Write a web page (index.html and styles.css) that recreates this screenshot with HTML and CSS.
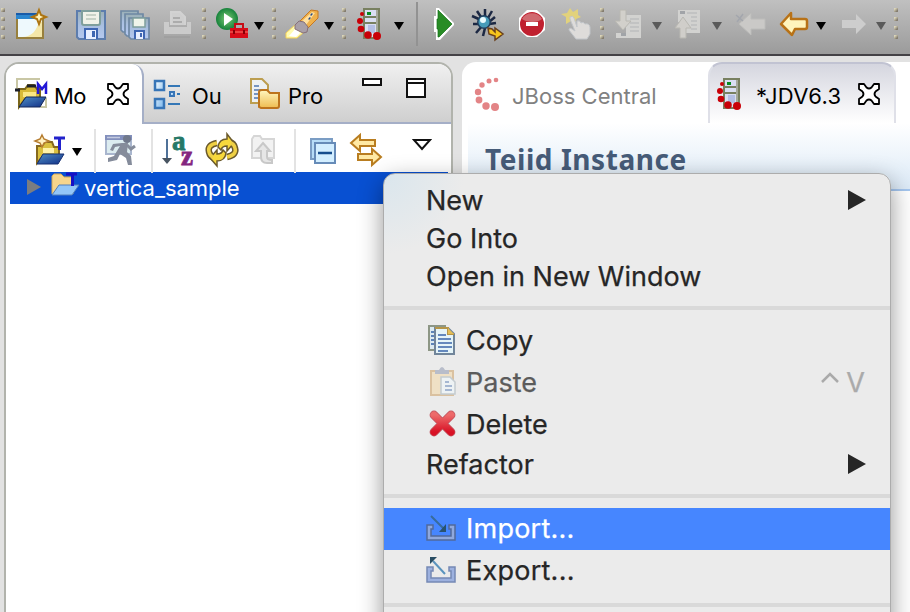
FILE: index.html
```html
<!DOCTYPE html>
<html lang="en">
<head>
<meta charset="utf-8">
<title>Teiid Designer</title>
<link rel="stylesheet" href="styles.css">
</head>
<body>
<svg class="defs" aria-hidden="true">
  <defs>
    <linearGradient id="disk" x2="0" y2="1"><stop stop-color="#9aafb5"/><stop offset=".5" stop-color="#a9bfe0"/><stop offset="1" stop-color="#b5c9f0"/></linearGradient>
    <linearGradient id="gold" x2="0" y2="1"><stop stop-color="#fff7c0"/><stop offset="1" stop-color="#eebc50"/></linearGradient>
    <linearGradient id="navy" x2="1" y2="1"><stop stop-color="#4f8fc4"/><stop offset="1" stop-color="#102e87"/></linearGradient>
    <linearGradient id="sky" x2="1" y2="1"><stop stop-color="#f5fcff"/><stop offset="1" stop-color="#79b5ec"/></linearGradient>
    <linearGradient id="red" x2="0" y2="1"><stop stop-color="#ed6a6a"/><stop offset="1" stop-color="#d81125"/></linearGradient>
    <radialGradient id="green"><stop stop-color="#7cca73"/><stop offset="1" stop-color="#16823b"/></radialGradient>
    <symbol id="caret" viewBox="0 0 10 8"><path d="M0 0h10L5 8z" fill="currentColor"/></symbol>
    <symbol id="close" viewBox="0 0 22 22"><path d="M1 1h5l2.500 3.500q2.500 2 5 0L16 1h5v5l-3.500 2.500q-2 2.500 0 5L21 16v5h-5l-2.500-3.500q-2.500-2-5 0L6 21H1v-5l3.500-2.500q2-2.500 0-5L1 6z" fill="#fff" stroke="#000" stroke-width="1.800" stroke-linejoin="round"/></symbol>
    <symbol id="server" viewBox="0 0 32 32">
      <path d="M9 1h15v29H9z" fill="#d9def1" stroke="#788060" stroke-width="2"/>
      <path d="M9 9h15M9 15h15" stroke="#788060" stroke-width="2"/><path d="M22 2v27" stroke="#a5a99b" stroke-width="2"/>
      <path d="M13 17h7v8h-7z" fill="#b4bfe5"/><path d="M12 4h4v3h-4z" fill="#078c1e"/>
      <g fill="#c90008"><circle cx="7" cy="6" r="2"/><circle cx="5" cy="13" r="3"/><circle cx="6" cy="21" r="3.300"/><circle cx="13" cy="27" r="3.800"/><circle cx="22" cy="28" r="4"/></g>
    </symbol>
  </defs>
</svg>

<header class="toolbar">
  <i class="grip"></i>
  <svg class="icon" viewBox="0 0 32 32"><path d="M2 8h26v22H2z" fill="#eef9fd" stroke="#98803d" stroke-width="2"/><path d="M1 5h22v6H1z" fill="#2c86cf"/><path d="M1 5h22v2H1z" fill="#195ba8"/><path d="M7 29c10 0 15-7 17-16l3 1v15z" fill="#f4e7a8"/><path d="M24 2l2 5 5 2-5 2-2 5-2-5-5-2 5-2z" fill="#fff4bd" stroke="#ad7411" stroke-width="2"/></svg>
  <svg class="caret"><use href="#caret"/></svg>
  <svg class="icon" viewBox="0 0 32 32"><path d="M2 3h28v28H4l-2-2z" fill="url(#disk)" stroke="#5d7dad" stroke-width="2"/><path d="M7 3h18v12q0 2-2 2H9q-2 0-2-2z" fill="#f0f2e8" stroke="#7f9f9c" stroke-width="2"/><path d="M11 7h10M11 11h10" stroke="#c8d2c6" stroke-width="2"/><path d="M10 31V21h12v10" fill="#e8efff" stroke="#3e66b2" stroke-width="2"/><path d="M17 23h3v6h-3z" fill="#3e66b2"/></svg>
  <svg class="icon" viewBox="0 0 32 32"><g fill="url(#disk)" stroke="#6e88a4" stroke-width="1.700"><path d="M2 3h17v21H4l-2-2z"/><path d="M6 6h18v22H8l-2-2z"/><path d="M10 10h20v21H12l-2-2z"/></g><path d="M14 10h12v9H14z" fill="#eff4ea" stroke="#7f9f9c" stroke-width="1.500"/><path d="M16 31v-8h9v8" fill="#e8efff" stroke="#3e66b2" stroke-width="2"/><path d="M21 25h2v4h-2z" fill="#3e66b2"/></svg>
  <svg class="icon" viewBox="0 0 32 32"><path d="M10 17V4h9l5 5v8" fill="#cfcfcf" stroke="#d2d2d2" stroke-width="2"/><path d="M12 10h7M12 14h9" stroke="#acacac" stroke-width="2"/><path d="M3 14h5v5h18v-5h4v12H3z" fill="#cbcbcb"/><path d="M3 29h26" stroke="#989898"/></svg>
  <i class="grip"></i>
  <svg class="icon" viewBox="0 0 32 32"><circle cx="12" cy="11" r="11" fill="url(#green)"/><path d="M9 5l9 6-9 7z" fill="#fff"/><path d="M20 20v-4h8v4" fill="none" stroke="#c50d16" stroke-width="2"/><path d="M15 20h18v10H15z" fill="#d80c18"/><path d="M15 24h18" stroke="#f2554f" stroke-width="1.500"/><path d="M19 22v4M29 22v4" stroke="#850006" stroke-width="2"/></svg>
  <svg class="caret"><use href="#caret"/></svg>
  <i class="grip"></i>
  <svg class="icon" viewBox="0 0 32 32"><path d="M15 13L26 2l7 1v7L22 21z" fill="#efb14c" stroke="#c67822"/><path d="M17 13L27 4l3 1-9 12z" fill="#ffe0a0"/><path d="M26 6l1 1m-3 3l1 1" stroke="#244986" stroke-width="2.500"/><path d="M1 30v-5l10-9 8 8-7 6z" fill="#fffbb0" stroke="#f5d256"/><path d="M4 28l7-8 4 5-4 4z" fill="#fff"/><path d="M10 17l4-4 5 1 4 5-1 5-4 1-8-4z" fill="#a9a0a8" stroke="#86707a"/></svg>
  <svg class="caret"><use href="#caret"/></svg>
  <i class="grip"></i>
  <svg class="icon" viewBox="0 0 32 32"><use href="#server"/></svg>
  <svg class="caret"><use href="#caret"/></svg>
  <i class="divider"></i>
  <svg class="icon" viewBox="0 0 32 32"><path d="M9 0h3l15 15v2L13 32H9v-8H7V8h2z" fill="#fff"/><path d="M11 2l14 14-13 13h-1v-8h-1V11h1z" fill="#288c25" stroke="#15701a" stroke-width=".7"/></svg>
  <svg class="icon" viewBox="0 0 32 32"><path d="M6 3l4 6M14 1v8M21 3l-4 7M1 8l9 4M2 16h8M5 25l6-7M24 9l-6 5M25 15l-7 1M12 28l2-8" stroke="#1c2843" stroke-width="2.500"/><circle cx="13" cy="14" r="7" fill="#22405f"/><circle cx="13" cy="14" r="5.500" fill="#469bb9"/><circle cx="12" cy="12" r="3" fill="#e9fbff"/><path d="M17 20l4 1 3 3v-4l8 6-8 6v-4l-6-2z" fill="#f8c51c" stroke="#69401d" stroke-width="1.500"/></svg>
  <svg class="icon" viewBox="0 0 32 32"><path d="M10 2h10l8 8v12l-8 7H10l-8-7V10z" fill="#fff"/><circle cx="15" cy="16" r="12" fill="#c0202f"/><path d="M5 11a11 10 0 0120 0c-4 4-15 4-20 0z" fill="#d06a70"/><path d="M9 14h12v4H9z" fill="#fff"/></svg>
  <svg class="icon" viewBox="0 0 32 32"><path d="M9 0l3 4 5-3v6l3 2-5 2-1 5-4-3-5 3V9L0 6l6-1z" fill="#e2d27c"/><path d="M9 9q3-2 4 1l3 9V13q3-1 4 2 2-2 4 1 4-1 5 3v7l-3 5H15l-7-9q0-3 3-1l3 2-5-12z" fill="#dedcda" stroke="#c2c6ca"/></svg>
  <i class="grip"></i>
  <svg class="icon" viewBox="0 0 32 32"><path d="M13 7h15v23H3v-5h10z" fill="#d2d2d0"/><path d="M17 11h9M17 15h9M17 19h9M17 23h9" stroke="#c2c3c3" stroke-width="2"/><path d="M7 2h6v11h5l-8 9-8-9h5z" fill="#d2d0cb" stroke="#b9b8b2"/><path d="M8 25h5v3H8z" fill="#a1a4a8"/></svg>
  <svg class="caret dim"><use href="#caret"/></svg>
  <svg class="icon" viewBox="0 0 32 32"><path d="M5 2h22v23H11v-11H5z" fill="#d2d2d0"/><path d="M14 5h10M18 9h6M18 13h6M18 17h6M18 21h6" stroke="#c2c3c3" stroke-width="2"/><path d="M7 30h6V20h5l-8-11-8 11h5z" fill="#d0ceca" stroke="#b9b8b2"/><path d="M7 3h5v3H7z" fill="#a1a4a8"/></svg>
  <svg class="caret dim"><use href="#caret"/></svg>
  <svg class="icon" viewBox="0 0 32 32"><path d="M5 16L17 5v6h14v10H17v6z" fill="#cac9c7" stroke="#bcbcba"/><path d="M2 7l7 6M9 6l-6 8" stroke="#a3a6ad" stroke-width="1.500"/></svg>
  <svg class="icon" viewBox="0 0 32 32"><path d="M3 16L13 5v6h14q2 0 2 2v6q0 2-2 2H17l-3 6-11-11z" fill="#fff4bc" stroke="#b87217" stroke-width="2.500" stroke-linejoin="round"/></svg>
  <svg class="caret"><use href="#caret"/></svg>
  <svg class="icon" viewBox="0 0 32 32"><path d="M28 16L18 6v6H4v8h14v6z" fill="#cdcdcd"/></svg>
  <svg class="caret dim"><use href="#caret"/></svg>
  <i class="grip"></i>
</header>

<main class="workbench">
  <section class="explorer">
    <nav class="tabs">
      <div class="tab tab-active">
        <svg class="icon" viewBox="0 0 32 32"><path d="M2 12V1h23M31 20v9h-6" fill="none" stroke="#c9c7a5" stroke-width="2"/><path d="M4 29V11h6l3-4h6l3 4h3v10H10z" fill="#d8ba36" stroke="#7a661a" stroke-width="2"/><path d="M0 12h5M12 8h9" stroke="#1c1f28" stroke-width="3"/><path d="M8 14h13v5H8z" fill="#fae783"/><path d="M11 19h20l-6 10H4z" fill="url(#navy)" stroke="#142656"/><path d="M23 16V6l4 5 4-5v10" fill="none" stroke="#2116d6" stroke-width="2.500"/></svg>
        <span class="label">Mo</span>
        <svg class="close"><use href="#close"/></svg>
      </div>
      <div class="tab-rest">
        <svg class="icon" viewBox="0 0 32 32"><g fill="url(#sky)" stroke="#3775b7" stroke-width="2.500"><path d="M4 3h9v9H4zM4 21h9v9H4z"/><path d="M19 14h4v4h-4z" stroke-width="2"/></g><path d="M17 8h12M26 16h3M17 26h12" stroke="#3477b6" stroke-width="2"/></svg>
        <span class="label label-ou">Ou</span>
        <svg class="icon icon-pro" viewBox="0 0 32 32"><path d="M2 1h11l6 6v18H2z" fill="#edf1f3" stroke="#bc9e50" stroke-width="2"/><path d="M5 8h5M5 12h8M5 16h5M5 20h5" stroke="#7695c1" stroke-width="2"/><path d="M10 29V14q0-2 3-2h5l3 3h9v13q0 2-2 2H12z" fill="url(#gold)" stroke="#bd741d" stroke-width="2"/></svg>
        <span class="label label-pro">Pro</span>
        <svg class="winmin" viewBox="0 0 20 8"><path d="M1 1h18v6H1z" fill="#fff" stroke="#111" stroke-width="2"/></svg>
        <svg class="winmax" viewBox="0 0 20 20"><path d="M1 1h18v18H1zM1 5h18" fill="#fff" stroke="#111" stroke-width="2"/></svg>
      </div>
    </nav>
    <div class="viewbar">
      <svg class="icon" viewBox="0 0 32 32"><path d="M3 29V12h5l3-4h7l2 5h5v8H10z" fill="#dac03f" stroke="#86691e" stroke-width="2"/><path d="M9 14h11v5H9z" fill="#fff2a8"/><path d="M9 20h21l-6 10H3z" fill="url(#navy)" stroke="#173073"/><path d="M8 1l2 4 5 2-5 2-2 4-2-4-5-2 5-2z" fill="#fff1c2" stroke="#b67d30" stroke-width="1.500"/><path d="M20 4h11M25.500 4v12" stroke="#2222cc" stroke-width="3"/></svg>
      <svg class="caret"><use href="#caret"/></svg>
      <i class="split"></i>
      <svg class="icon" viewBox="0 0 32 32"><path d="M1 2h25v18H1z" fill="#dcecf0" stroke="#a9b6ce" stroke-width="2"/><path d="M0 1h27v5H0z" fill="#8390bd"/><path d="M2 3.500h13" stroke="#c4cae0" stroke-width="1.500"/><circle cx="22" cy="5" r="4" fill="#71798c"/><path d="M17 9h6l-1 9 4 4 1 9h-4l-2-7-6-4-3 6-9 2v-4l6-2 6-10-5 1-2 4-3-1 3-6z" fill="#858c9b"/><path d="M22 11l4 4 4-3" fill="none" stroke="#858c9b" stroke-width="3"/></svg>
      <i class="split"></i>
      <svg class="icon" viewBox="0 0 32 32"><path d="M5 5v20" stroke="#4f7198" stroke-width="2"/><path d="M0 24h10l-5 6z" fill="#485461"/><text x="10" y="16" class="sort-a">a</text><text x="19" y="31" class="sort-z">z</text></svg>
      <svg class="icon" viewBox="0 0 32 32"><g fill="none" stroke="#6b5a2c" stroke-width="6.500"><path d="M11 9Q1 11 3 18q1 5 6 6"/><path d="M21 23q10-2 8-9-1-5-6-6"/></g><path d="M21 0v5q-8 0-9 8l3 3q1-4 6-4v5l7-8z" fill="#f7d83c" stroke="#6b5a2c" stroke-width="1.500"/><path d="M11 32v-5q8 0 9-8l-3-3q-1 4-6 4v-4l-7 8z" fill="#f7d83c" stroke="#6b5a2c" stroke-width="1.500"/><g fill="none" stroke="#efd044" stroke-width="3.500"><path d="M11 9Q1 11 3 18q1 4 4 5"/><path d="M21 23q10-2 8-9-1-4-4-5"/></g></svg>
      <svg class="icon" viewBox="0 0 32 32"><path d="M4 24V5l2-3h6l2 3h12v19z" fill="#f2f2f2" stroke="#d6d6d6" stroke-width="2"/><path d="M15 9l7 8h-3v6q0 3 5 3v3h-5q-6 0-6-6v-6H8z" fill="#e6e6e6" stroke="#c8c8c8" stroke-width="2"/></svg>
      <i class="split"></i>
      <svg class="icon" viewBox="0 0 32 32"><path d="M3 5h21v20H3z" fill="#b7dcf7" stroke="#7b9dc4" stroke-width="2"/><path d="M7 9h20v20H7z" fill="#d3eeff" stroke="#668bb8" stroke-width="2"/><path d="M10 19h14" stroke="#164d8d" stroke-width="2.500"/></svg>
      <svg class="icon" viewBox="0 0 32 32"><g fill="#ffe9a4" stroke="#b97d20" stroke-width="2"><path d="M1 9L10 1v5h15v6H10v5z"/><path d="M31 23l-9-8v5H8v6h14v5z"/></g></svg>
      <svg class="viewmenu" viewBox="0 0 20 12"><path d="M2 1h16l-8 9z" fill="#fff" stroke="#111" stroke-width="2"/></svg>
    </div>
    <div class="tree-row">
      <svg class="twisty" viewBox="0 0 14 18"><path d="M0 1v16l14-8z" fill="#7b7d80"/></svg>
      <svg class="icon" viewBox="0 0 32 32"><path d="M3 22V4l2-2h7l3 3h9v17z" fill="#f6d58c" stroke="#d1a855"/><path d="M10 13h20l-7 10H3z" fill="#92c6f8" stroke="#507fbb"/><path d="M17 2h11M23.500 2v12" stroke="#160fc4" stroke-width="3"/></svg>
      <span class="tree-label">vertica_sample</span>
    </div>
  </section>

  <section class="editor">
    <nav class="editor-tabs">
      <div class="etab">
        <svg class="icon" viewBox="0 0 32 32"><g fill="#e38486"><circle cx="22" cy="2" r="2.300"/><circle cx="15" cy="3" r="2.500"/><circle cx="8" cy="7" r="2.700"/><circle cx="4" cy="14" r="3.200"/><circle cx="5" cy="22" r="3.400"/><circle cx="12" cy="28" r="3.700"/><circle cx="21" cy="29" r="4"/></g></svg>
        <span class="label central">JBoss Central</span>
      </div>
      <div class="etab etab-active">
        <svg class="icon" viewBox="0 0 32 32"><use href="#server"/></svg>
        <span class="label jdv">*JDV6.3</span>
        <svg class="close"><use href="#close"/></svg>
      </div>
    </nav>
    <div class="form-head"><h1>Teiid Instance</h1></div>
  </section>
</main>

<div class="menu">
  <div class="item"><span>New</span><svg class="arrow" viewBox="0 0 18 20"><path d="M0 0v20l18-10z"/></svg></div>
  <div class="item"><span>Go Into</span></div>
  <div class="item"><span>Open in New Window</span></div>
  <hr>
  <div class="item tall"><svg class="icon" viewBox="0 0 32 32"><path d="M4 2h16v24H4z" fill="#dceaf0" stroke="#8d9685" stroke-width="2"/><path d="M6 8h4M6 12h4M6 16h4M6 20h4" stroke="#5d84b8" stroke-width="2"/><path d="M10 4h13l6 6v20H10z" fill="#e5f4f8" stroke="#71859a" stroke-width="2"/><path d="M10 4h13v6h6" fill="none" stroke="#b59548" stroke-width="2"/><path d="M23 4v6h6z" fill="#e4bd57"/><path d="M13 11h8M13 15h13M13 19h14M13 23h14M13 27h10" stroke="#6488bd" stroke-width="2"/></svg><span>Copy</span></div>
  <div class="item tall disabled"><svg class="icon" viewBox="0 0 32 32"><path d="M6 5h22v24H6z" fill="#efe0c5" stroke="#dac1a0" stroke-width="2"/><path d="M10 8V4h4q3-6 6 0h4v4z" fill="#b8bdca"/><path d="M16 11h9l5 5v12H16z" fill="#edf2f4" stroke="#c4cbd0" stroke-width="1.500"/><path d="M20 16h4M20 20h7M20 24h7" stroke="#a5b7d2" stroke-width="2"/></svg><span>Paste</span><svg class="ctrl" viewBox="0 0 18 11"><path d="M1 10l8-8 8 8"/></svg><span class="key">V</span></div>
  <div class="item tall"><svg class="icon" viewBox="0 0 32 32"><path d="M9 7l17 17M26 7L9 24" stroke="#c25560" stroke-width="8.800" stroke-linecap="round"/><path d="M9 7l17 17M26 7L9 24" stroke="url(#red)" stroke-width="7" stroke-linecap="round"/></svg><span>Delete</span></div>
  <div class="item refactor"><span>Refactor</span><svg class="arrow" viewBox="0 0 18 20"><path d="M0 0v20l18-10z"/></svg></div>
  <hr>
  <div class="item tall selected"><svg class="icon" viewBox="0 0 32 32"><path d="M2 12h6v4H6v7h20v-7h-2v-4h6v15H2z" fill="#8fa8dd" stroke="#52699b" stroke-width="1.500"/><path d="M6 3l13 13" stroke="#386c9b" stroke-width="2"/><path d="M21 11v8h-7z" fill="#29536f"/></svg><span>Import...</span></div>
  <div class="item tall"><svg class="icon" viewBox="0 0 32 32"><path d="M2 12h6v4H6v7h20v-7h-2v-4h6v15H2z" fill="#9db1df" stroke="#7589b5" stroke-width="1.500"/><path d="M8 6l12 13" stroke="#5b94be" stroke-width="2"/><path d="M5 2v7l7-7z" fill="#284c62"/></svg><span>Export...</span></div>
  <hr>
</div>
</body>
</html>
```
FILE: styles.css
```css
* { box-sizing: border-box; }
body { margin: 0; width: 910px; height: 612px; overflow: hidden; background: #e2e2e2; color: #000; font-family: Inter, "Liberation Sans", sans-serif; }
svg { display: block; flex: none; }
.defs { position: absolute; width: 0; height: 0; }
.icon { width: 32px; height: 32px; overflow: visible; }
.caret { width: 10px; height: 8px; color: #000; }
.dim { color: #5a5a5a; }

.toolbar { height: 56px; padding: 8px 0 0 1px; display: grid; align-items: start; grid-template-columns: 14px 37px 23px 44px 42px 41px 13px 39px 18px 13px 39px 18px 13px 39px 22px 11px 44px 46px 44px 39px 13px 39px 21px 39px 22px 44px 38px 22px 38px 18px 16px; background: linear-gradient(#c0c0c0, #9b9b9b); border-bottom: 2px solid #444246; }
.toolbar .caret { margin-top: 14px; }
.grip { width: 4px; height: 36px; background: linear-gradient(135deg, #dcd6ba 20%, #857e70 75%) 0 0 / 4px 4px no-repeat, linear-gradient(135deg, #dcd6ba 20%, #857e70 75%) 0 9px / 4px 4px no-repeat, linear-gradient(135deg, #dcd6ba 20%, #857e70 75%) 0 18px / 4px 4px no-repeat, linear-gradient(135deg, #dcd6ba 20%, #857e70 75%) 0 27px / 4px 4px no-repeat; }
.divider { width: 2px; height: 44px; margin-top: -6px; background: #929292; }

.workbench { display: flex; gap: 9px; height: 556px; padding: 6px 0 0 4px; }
.explorer { width: 449px; height: 560px; border: 2px solid #b1b3ac; border-radius: 15px 15px 0 0; background: #fff; overflow: hidden; }
.tabs { display: flex; height: 60px; background: linear-gradient(#f0f0f0, #cecece); }
.tab, .tab-rest { display: flex; align-items: flex-start; }
.tab-active { width: 138px; padding: 14px 0 0 9px; background: #fff; border-right: 2px solid #a5afc7; border-radius: 0 12px 0 0; }
.tab-rest { flex: 1; padding: 14px 0 0 7px; border-bottom: 2px solid #a5afc7; }
.label { font-size: 22px; line-height: 28px; margin-top: 4px; white-space: nowrap; }
.tab-active .label { width: 53px; margin-left: 7px; letter-spacing: -.6px; }
.close { width: 22px; height: 22px; margin-top: 5px; }
.label-ou { width: 57px; margin-left: 9px; }
.label-pro { width: 74px; margin-left: 7px; }
.winmin { width: 20px; height: 8px; }
.winmax { width: 20px; height: 20px; margin-left: 24px; }
.viewbar { height: 48px; padding: 10px 0 0 28px; display: grid; align-items: start; grid-template-columns: 38px 22px 11px 46px 11px 44px 42px 46px 14px 42px 62px 20px; }
.viewbar .caret { margin-top: 14px; }
.split { width: 2px; height: 44px; margin-top: -5px; background: #e3e3e3; }
.sort-a, .sort-z { font: bold 27px "Liberation Serif", serif; fill: #267868; stroke: #267868; stroke-width: .8px; }
.sort-z { fill: #84267f; stroke: #84267f; }
.viewmenu { width: 20px; height: 12px; margin-top: 5px; }
.tree-row { height: 32px; margin: 0 3px 0 4px; padding-left: 17px; display: flex; align-items: flex-start; background: #0850d2; color: #fff; }
.twisty { width: 14px; height: 18px; margin-top: 6px; }
.tree-row .icon { margin-left: 8px; }
.tree-label { margin-left: 3px; font-size: 22px; line-height: 32px; letter-spacing: -.02px; }

.editor { flex: 1; background: #fff; border-radius: 14px 0 0 0; overflow: hidden; }
.editor-tabs { height: 61px; display: flex; }
.etab { display: flex; align-items: flex-start; width: 246px; padding: 16px 0 0 12px; color: #818181; }
.etab .label { margin-left: 6px; }
.etab-active { width: 188px; padding: 14px 0 0 5px; color: #000; border: 2px solid; border-color: #c1c3d2 #dfe0e8; border-bottom: 0; border-radius: 14px 14px 0 0; background: linear-gradient(#d5d6df, #fff); }
.etab-active .label { width: 103px; margin-left: 9px; letter-spacing: .2px; }
.etab-active .close { margin-left: -1px; }
.form-head { height: 68px; margin-left: 6px; padding: 17px 0 0 17px; background: linear-gradient(#fff, #dceaf7); border-bottom: 2px solid #a5c6ef; }
h1 { margin: 0; font: bold 28px/38px "Noto Sans", sans-serif; letter-spacing: .55px; color: #465b78; white-space: nowrap; }

.menu { position: absolute; left: 383px; top: 173px; width: 508px; height: 460px; padding-top: 7px; border: 1px solid #acacac; border-radius: 12px 12px 0 0; background: radial-gradient(circle at 0 0, #dae6ed, #ebebeb 80px); box-shadow: 0 8px 24px rgba(0,0,0,.42); color: #262626; font-size: 27px; -webkit-text-stroke: .25px; }
.item { height: 38px; padding-left: 42px; display: flex; align-items: center; line-height: 36px; white-space: nowrap; }
.item span { padding-top: 2px; }
.tall { height: 42px; padding-left: 41px; }
.tall span:first-of-type { margin-left: 9px; }
.menu hr { height: 4px; margin: 11px 0 9px; border: 0; background: #d9d9d9; }
.menu hr + .selected { margin-top: 10px; }
.selected span, .selected + .item span { padding-top: 0; letter-spacing: .25px; }
.refactor { margin-bottom: 10px; }
.disabled { color: #5b5b5b; }
.selected { background: #4686ff; color: #fff; }
.arrow { width: 18px; height: 20px; margin: 0 24px 0 auto; fill: #262626; }
.ctrl { width: 18px; height: 11px; margin: -10px 7px 0 auto; fill: none; stroke: #aaa; stroke-width: 2.500; }
.key { margin-right: 25px; color: #aaa; }
```
